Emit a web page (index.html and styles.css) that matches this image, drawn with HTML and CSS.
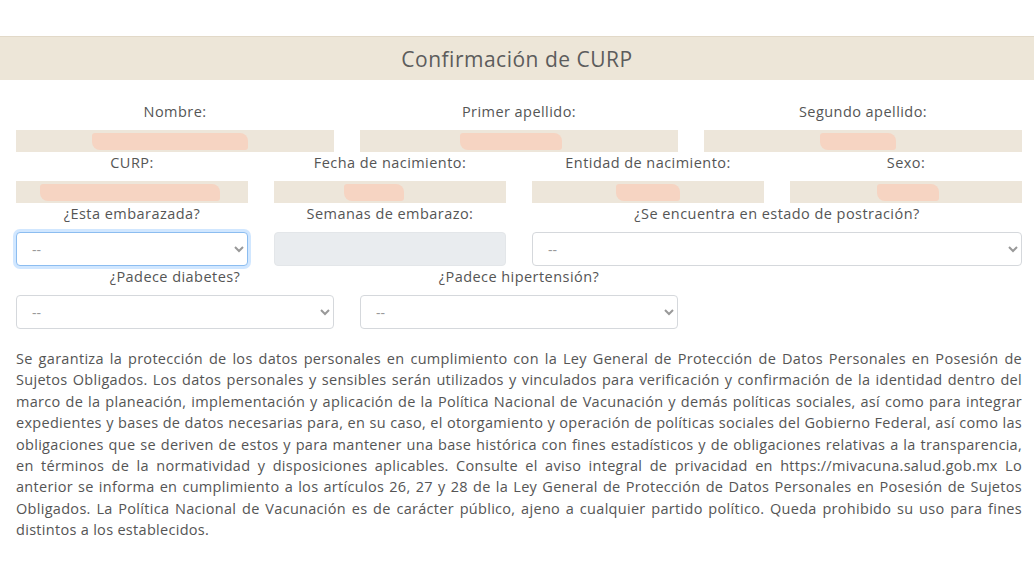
FILE: index.html
```html
<!DOCTYPE html>
<html lang="es">
<head>
    <meta charset="UTF-8">
    <meta name="viewport" content="width=device-width, initial-scale=1.0">
    <title>Confirmación de CURP</title>
    <link rel="stylesheet" href="styles.css">
</head>
<body>
    <div class="top-space"></div>

    <header class="band">
        <h1>Confirmación de CURP</h1>
    </header>

    <form class="curp-form">
        <div class="row row-3">
            <div class="field">
                <label>Nombre:</label>
                <div class="data"><span class="mark" style="margin-left: 76px; width: 156px;"></span></div>
            </div>
            <div class="field">
                <label>Primer apellido:</label>
                <div class="data"><span class="mark" style="margin-left: 100px; width: 102px;"></span></div>
            </div>
            <div class="field">
                <label>Segundo apellido:</label>
                <div class="data"><span class="mark" style="margin-left: 116px; width: 76px;"></span></div>
            </div>
        </div>

        <div class="row row-4">
            <div class="field">
                <label>CURP:</label>
                <div class="data"><span class="mark" style="margin-left: 24px; width: 180px;"></span></div>
            </div>
            <div class="field">
                <label>Fecha de nacimiento:</label>
                <div class="data"><span class="mark" style="margin-left: 70px; width: 60px;"></span></div>
            </div>
            <div class="field">
                <label>Entidad de nacimiento:</label>
                <div class="data"><span class="mark" style="margin-left: 84px; width: 64px;"></span></div>
            </div>
            <div class="field">
                <label>Sexo:</label>
                <div class="data"><span class="mark" style="margin-left: 87px; width: 62px;"></span></div>
            </div>
        </div>

        <div class="row row-4">
            <div class="field">
                <label for="embarazada">¿Esta embarazada?</label>
                <select id="embarazada" class="control focused">
                    <option>--</option>
                    <option>Sí</option>
                    <option>No</option>
                </select>
            </div>
            <div class="field">
                <label for="semanas">Semanas de embarazo:</label>
                <input id="semanas" class="control" type="text" disabled>
            </div>
            <div class="field span-2">
                <label for="postracion">¿Se encuentra en estado de postración?</label>
                <select id="postracion" class="control">
                    <option>--</option>
                    <option>Sí</option>
                    <option>No</option>
                </select>
            </div>
        </div>

        <div class="row row-3">
            <div class="field">
                <label for="diabetes">¿Padece diabetes?</label>
                <select id="diabetes" class="control">
                    <option>--</option>
                    <option>Sí</option>
                    <option>No</option>
                </select>
            </div>
            <div class="field">
                <label for="hipertension">¿Padece hipertensión?</label>
                <select id="hipertension" class="control">
                    <option>--</option>
                    <option>Sí</option>
                    <option>No</option>
                </select>
            </div>
        </div>
    </form>

    <p class="privacy">Se garantiza la protección de los datos personales en cumplimiento con la Ley General de Protección de Datos Personales en Posesión de Sujetos Obligados. Los datos personales y sensibles serán utilizados y vinculados para verificación y confirmación de la identidad dentro del marco de la planeación, implementación y aplicación de la Política Nacional de Vacunación y demás políticas sociales, así como para integrar expedientes y bases de datos necesarias para, en su caso, el otorgamiento y operación de políticas sociales del Gobierno Federal, así como las obligaciones que se deriven de estos y para mantener una base histórica con fines estadísticos y de obligaciones relativas a la transparencia, en términos de la normatividad y disposiciones aplicables. Consulte el aviso integral de privacidad en https://mivacuna.salud.gob.mx Lo anterior se informa en cumplimiento a los artículos 26, 27 y 28 de la Ley General de Protección de Datos Personales en Posesión de Sujetos Obligados. La Política Nacional de Vacunación es de carácter público, ajeno a cualquier partido político. Queda prohibido su uso para fines distintos a los establecidos.</p>
</body>
</html>
```

FILE: styles.css
```css
/* General Reset */
* {
    margin: 0;
    padding: 0;
    box-sizing: border-box;
}

body {
    font-family: "Open Sans", "DejaVu Sans", sans-serif;
    font-size: 14.5px;
    letter-spacing: 0.45px;
    background-color: #fff;
    color: #555;
}

/* Header band */
.top-space {
    height: 36px;
}

.band {
    background-color: #ede6d8;
    border-top: 1px solid #e2d9c8;
    height: 44px;
    display: flex;
    align-items: center;
    justify-content: center;
}

.band h1 {
    font-size: 21px;
    font-weight: 500;
    letter-spacing: 0.5px;
    color: #5c5c5c;
}

/* Form */
.curp-form {
    padding: 21px 12px 0 16px;
}

.row {
    display: grid;
    column-gap: 26px;
}

.row-3 {
    grid-template-columns: repeat(3, 1fr);
}

.row-4 {
    grid-template-columns: repeat(4, 1fr);
}

.span-2 {
    grid-column: span 2;
}

.field label {
    display: block;
    text-align: center;
    line-height: 21px;
    margin-bottom: 8px;
}

.data {
    height: 22px;
    background-color: #ede6da;
    display: flex;
    align-items: center;
}

.mark {
    display: inline-block;
    height: 17px;
    background-color: #f6d4c2;
    border-radius: 3px 8px 3px 8px;
}

.control {
    display: block;
    width: 100%;
    height: 34px;
    padding: 0 8px 0 11px;
    font-family: inherit;
    font-size: 14px;
    color: #999;
    background-color: #fff;
    border: 1px solid #d5d8dc;
    border-radius: 4px;
}

.control:disabled {
    background-color: #e9ecef;
    border-color: #e3e6e9;
}

.control.focused {
    border-color: #8cbdf0;
    box-shadow: 0 0 0 3px rgba(0, 123, 255, 0.18);
}

/* Privacy notice */
.privacy {
    margin-top: 19px;
    padding: 0 12px 0 16px;
    line-height: 21.4px;
    letter-spacing: 0.3px;
    text-align: justify;
    color: #555;
}
```
